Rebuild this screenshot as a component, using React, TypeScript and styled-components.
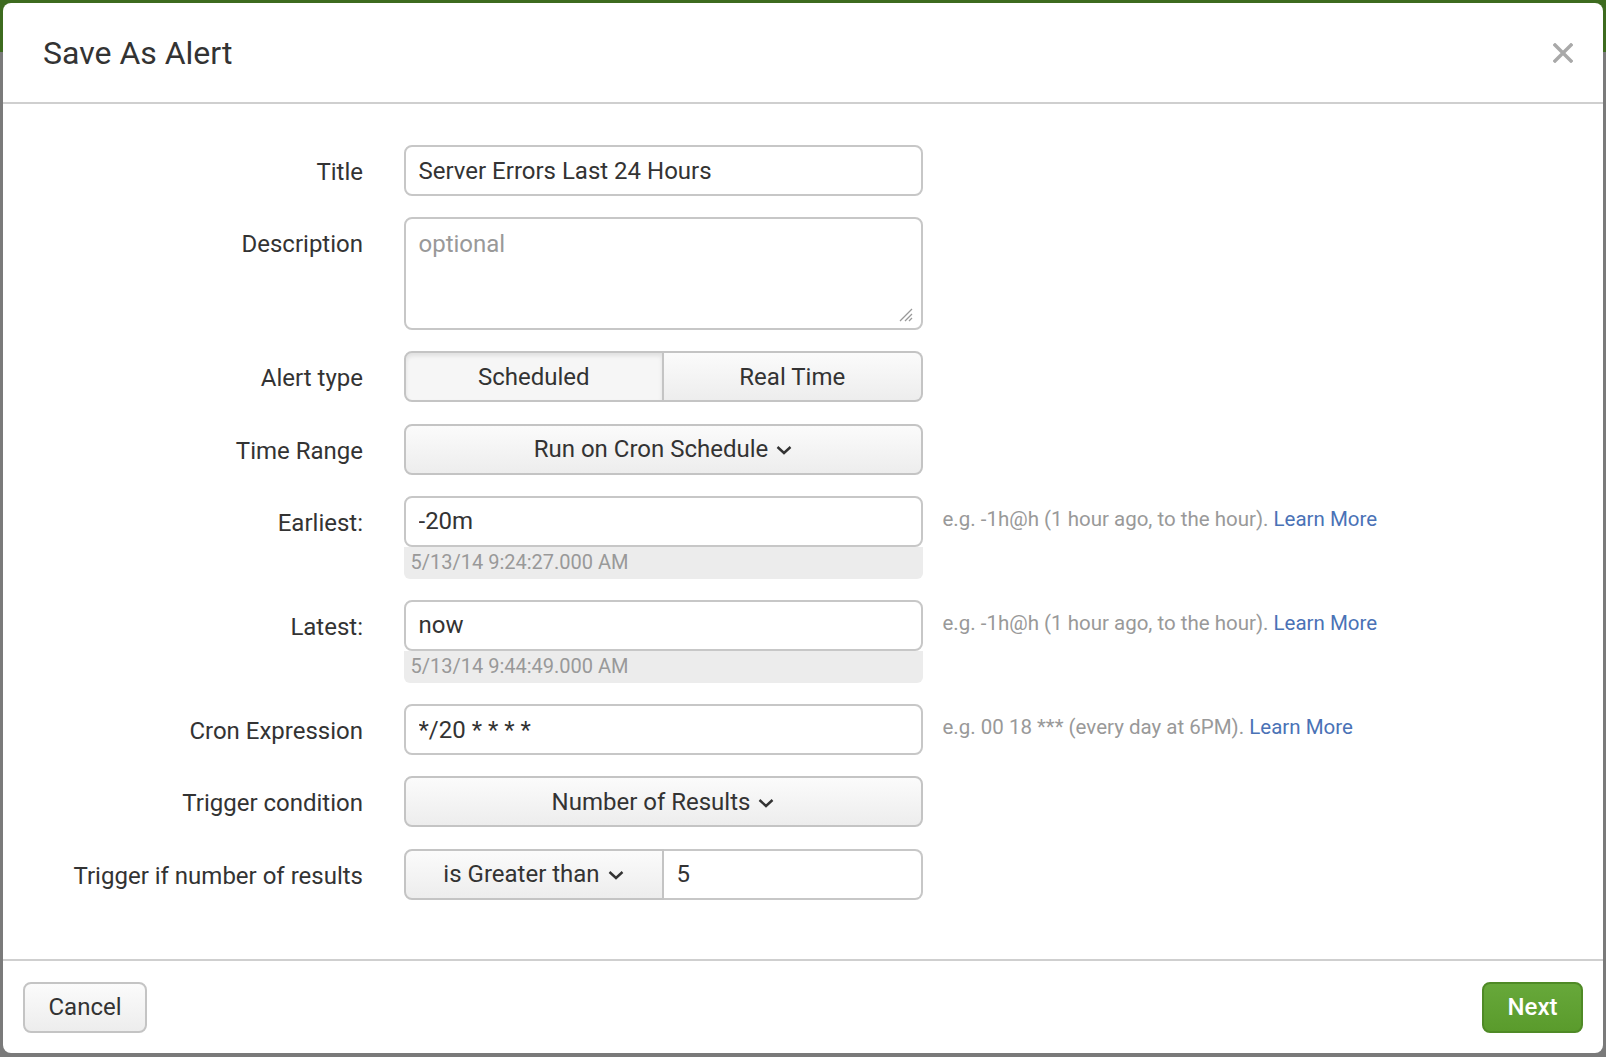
import React from "react";
import styled, { createGlobalStyle, css } from "styled-components";

const GlobalStyle = createGlobalStyle`
  html, body {
    margin: 0;
    padding: 0;
  }
  body {
    font-family: Roboto, "Liberation Sans", Arial, sans-serif;
    color: #333;
  }
  * {
    box-sizing: border-box;
  }
`;

const Chevron = () => (
  <ChevronSvg viewBox="0 0 16 10" width={16} height={10}>
    <polyline points="1.5,2 8,8 14.5,2" fill="none" stroke="#333" strokeWidth={2.4} />
  </ChevronSvg>
);

const CloseIcon = () => (
  <svg viewBox="0 0 20 20" width={20} height={20}>
    <path d="M2 2 L18 18 M18 2 L2 18" stroke="#a9a9a9" strokeWidth={3.4} strokeLinecap="square" />
  </svg>
);

const Grip = () => (
  <GripSvg viewBox="0 0 16 16" width={16} height={16}>
    <path d="M15 3 L3 15 M15 8 L8 15 M15 12 L12 15" stroke="#999" strokeWidth={1.3} />
  </GripSvg>
);

type Row = {
  label: string;
  hint?: string;
  resolved?: string;
  value: string;
};

const timeRows: Row[] = [
  {
    label: "Earliest:",
    value: "-20m",
    resolved: "5/13/14 9:24:27.000 AM",
    hint: "e.g. -1h@h (1 hour ago, to the hour). ",
  },
  {
    label: "Latest:",
    value: "now",
    resolved: "5/13/14 9:44:49.000 AM",
    hint: "e.g. -1h@h (1 hour ago, to the hour). ",
  },
];

const App = () => {
  return (
    <>
      <GlobalStyle />
      <Page>
        <Modal>
          <Header>
            <Title>Save As Alert</Title>
            <CloseBtn aria-label="close">
              <CloseIcon />
            </CloseBtn>
          </Header>

          <Body>
            <FormRow>
              <Label>Title</Label>
              <Control>
                <TextInput defaultValue="Server Errors Last 24 Hours" />
              </Control>
            </FormRow>

            <FormRow>
              <Label>Description</Label>
              <Control>
                <AreaWrap>
                  <TextArea placeholder="optional" />
                  <Grip />
                </AreaWrap>
              </Control>
            </FormRow>

            <FormRow>
              <Label>Alert type</Label>
              <Control>
                <Segmented>
                  <SegButton active>Scheduled</SegButton>
                  <SegButton>Real Time</SegButton>
                </Segmented>
              </Control>
            </FormRow>

            <FormRow>
              <Label>Time Range</Label>
              <Control>
                <DropButton>
                  Run on Cron Schedule <Chevron />
                </DropButton>
              </Control>
            </FormRow>

            {timeRows.map((r) => (
              <FormRow key={r.label}>
                <Label>{r.label}</Label>
                <Control>
                  <TextInput defaultValue={r.value} />
                  <Resolved>{r.resolved}</Resolved>
                </Control>
                <Hint>
                  {r.hint}
                  <HintLink href="#">Learn More</HintLink>
                </Hint>
              </FormRow>
            ))}

            <FormRow>
              <Label>Cron Expression</Label>
              <Control>
                <TextInput defaultValue="*/20 * * * *" />
              </Control>
              <Hint>
                e.g. 00 18 *** (every day at 6PM). <HintLink href="#">Learn More</HintLink>
              </Hint>
            </FormRow>

            <FormRow>
              <Label>Trigger condition</Label>
              <Control>
                <DropButton>
                  Number of Results <Chevron />
                </DropButton>
              </Control>
            </FormRow>

            <FormRow>
              <Label>Trigger if number of results</Label>
              <Control>
                <Split>
                  <SplitButton>
                    is Greater than <Chevron />
                  </SplitButton>
                  <SplitInput defaultValue="5" />
                </Split>
              </Control>
            </FormRow>
          </Body>

          <Footer>
            <FooterButton>Cancel</FooterButton>
            <FooterButton primary>Next</FooterButton>
          </Footer>
        </Modal>
      </Page>
    </>
  );
};

const Page = styled.div`
  height: 1057px;
  padding: 3px 3px 4px;
  background: linear-gradient(#3d6b1f 0, #3d6b1f 52px, #7a7a7a 52px);
`;

const Modal = styled.div`
  height: 100%;
  background: #fff;
  border-radius: 8px;
  display: flex;
  flex-direction: column;
  overflow: hidden;
`;

const Header = styled.div`
  height: 101px;
  flex: none;
  border-bottom: 2px solid #cfcfcf;
  display: flex;
  align-items: center;
  justify-content: space-between;
  padding: 0 30px 0 40px;
`;

const Title = styled.h1`
  margin: 0;
  font-size: 32px;
  font-weight: 400;
  color: #333;
`;

const CloseBtn = styled.button`
  border: 0;
  background: none;
  padding: 0;
  display: flex;
  cursor: pointer;
`;

const Body = styled.div`
  flex: 1;
  padding-top: 41px;
  display: flex;
  flex-direction: column;
  gap: 21.2px;
`;

const FormRow = styled.div`
  display: flex;
  align-items: flex-start;
`;

const Label = styled.label`
  width: 360px;
  flex: none;
  text-align: right;
  margin-right: 40.5px;
  font-size: 24px;
  line-height: 55px;
  height: 51px;
  color: #333;
  white-space: nowrap;
`;

const Control = styled.div`
  width: 519px;
  flex: none;
  display: flex;
  flex-direction: column;
`;

const fieldBase = css`
  font-family: Roboto, "Liberation Sans", Arial, sans-serif;
  font-size: 24px;
  color: #333;
  border: 2px solid #c7c7c7;
  border-radius: 8px;
  background: #fff;
  outline: none;
`;

const TextInput = styled.input`
  ${fieldBase}
  width: 100%;
  height: 51px;
  padding: 0 13px;
`;

const AreaWrap = styled.div`
  position: relative;
  height: 113px;
`;

const TextArea = styled.textarea`
  ${fieldBase}
  width: 100%;
  height: 100%;
  resize: none;
  padding: 11px 13px;
  line-height: 28px;
  &::placeholder {
    color: #999;
  }
`;

const GripSvg = styled.svg`
  position: absolute;
  right: 10px;
  bottom: 8px;
`;

const Resolved = styled.div`
  height: 32px;
  padding: 0 7px;
  background: #ececec;
  border-radius: 0 0 6px 6px;
  font-size: 20px;
  line-height: 31px;
  color: #999;
`;

const Hint = styled.div`
  margin-left: 20px;
  font-size: 20.5px;
  line-height: 47px;
  color: #999;
  white-space: nowrap;
`;

const HintLink = styled.a`
  color: #4a72b6;
  text-decoration: none;
`;

const buttonBase = css`
  font-family: Roboto, "Liberation Sans", Arial, sans-serif;
  font-size: 24px;
  color: #333;
  height: 51px;
  border: 2px solid #c4c4c4;
  border-radius: 8px;
  background: linear-gradient(#fbfbfb, #ededed);
  display: flex;
  align-items: center;
  justify-content: center;
  gap: 8px;
  padding: 0 16px;
  cursor: pointer;
`;

const ChevronSvg = styled.svg`
  flex: none;
  margin-top: 2px;
`;

const DropButton = styled.button`
  ${buttonBase}
  width: 100%;
`;

const Segmented = styled.div`
  display: flex;
`;

const SegButton = styled.button<{ active?: boolean }>`
  ${buttonBase}
  flex: 1;
  &:first-child {
    border-radius: 8px 0 0 8px;
  }
  &:last-child {
    border-radius: 0 8px 8px 0;
    border-left: 0;
  }
  ${({ active }) =>
    active &&
    css`
      background: #f6f6f6;
      box-shadow: inset 0 3px 4px rgba(0, 0, 0, 0.09);
    `}
`;

const Split = styled.div`
  display: flex;
  height: 51px;
`;

const SplitButton = styled.button`
  ${buttonBase}
  width: 260px;
  flex: none;
  border-radius: 8px 0 0 8px;
`;

const SplitInput = styled.input`
  ${fieldBase}
  flex: 1;
  min-width: 0;
  height: 51px;
  padding: 0 13px;
  border-left: 0;
  border-radius: 0 8px 8px 0;
`;

const Footer = styled.div`
  height: 94px;
  flex: none;
  border-top: 2px solid #cfcfcf;
  display: flex;
  align-items: center;
  justify-content: space-between;
  padding: 0 20px;
`;

const FooterButton = styled.button<{ primary?: boolean }>`
  ${buttonBase}
  width: ${({ primary }) => (primary ? "101px" : "124px")};
  ${({ primary }) =>
    primary &&
    css`
      color: #fff;
      font-weight: 500;
      background: linear-gradient(#67a83a, #5a9b2c);
      border-color: #4f8a26;
    `}
`;

export default App;
